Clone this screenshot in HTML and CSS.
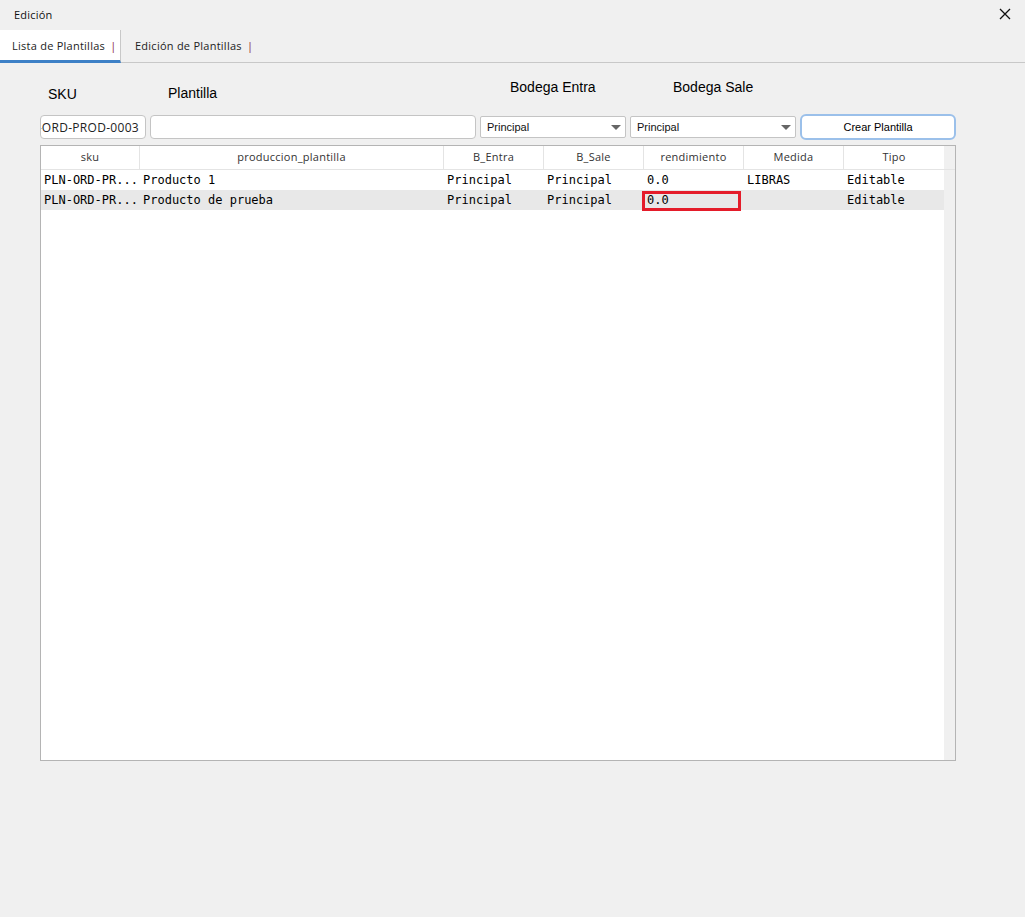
FILE: index.html
```html
<!DOCTYPE html>
<html lang="es">
<head>
    <meta charset="UTF-8">
    <title>Edición</title>
    <link rel="stylesheet" href="styles.css">
</head>
<body>
    <div class="titlebar">
        <span class="title">Edición</span>
        <svg class="close" width="12" height="12" viewBox="0 0 12 12">
            <path d="M1 1 L11 11 M11 1 L1 11" stroke="#111" stroke-width="1.3" fill="none"/>
        </svg>
    </div>

    <div class="tabs">
        <div class="tab active">Lista de Plantillas <span class="sep">|</span></div>
        <div class="tab">Edición de Plantillas <span class="sep">|</span></div>
        <div class="tab-rest"></div>
    </div>

    <div class="content">
        <div class="labels">
            <div class="label label-sku">SKU</div>
            <div class="label label-plantilla">Plantilla</div>
            <div class="label label-entra">Bodega Entra</div>
            <div class="label label-sale">Bodega Sale</div>
        </div>

        <div class="controls">
            <div class="field field-sku"><span>PLN-ORD-PROD-0003</span></div>
            <div class="field field-plantilla"></div>
            <div class="select select-entra">Principal <span class="arrow"></span></div>
            <div class="select select-sale">Principal <span class="arrow"></span></div>
            <button class="btn-crear">Crear Plantilla</button>
        </div>

        <div class="grid">
            <div class="row head">
                <div class="cell">sku</div>
                <div class="cell">produccion_plantilla</div>
                <div class="cell">B_Entra</div>
                <div class="cell">B_Sale</div>
                <div class="cell">rendimiento</div>
                <div class="cell">Medida</div>
                <div class="cell">Tipo</div>
            </div>
            <div class="body">
                <div class="rows">
                    <div class="row">
                        <div class="cell">PLN-ORD-PR...</div>
                        <div class="cell">Producto 1</div>
                        <div class="cell">Principal</div>
                        <div class="cell">Principal</div>
                        <div class="cell">0.0</div>
                        <div class="cell">LIBRAS</div>
                        <div class="cell">Editable</div>
                    </div>
                    <div class="row alt">
                        <div class="cell">PLN-ORD-PR...</div>
                        <div class="cell">Producto de prueba</div>
                        <div class="cell">Principal</div>
                        <div class="cell">Principal</div>
                        <div class="cell focused">0.0</div>
                        <div class="cell"></div>
                        <div class="cell">Editable</div>
                    </div>
                </div>
                <div class="scrollbar"></div>
            </div>
        </div>
    </div>
</body>
</html>
```

FILE: styles.css
```css
body {
    margin: 0;
    background-color: #f0f0f0;
    font-family: "Open Sans", "Liberation Sans", sans-serif;
    color: #111;
    width: 1025px;
    height: 917px;
    overflow: hidden;
}

.titlebar {
    height: 30px;
    display: flex;
    align-items: center;
    justify-content: space-between;
    padding: 0 14px 0 14px;
    box-sizing: border-box;
}

.title {
    font-size: 11px;
    letter-spacing: 0.2px;
    margin-top: -2px;
}

.close {
    margin-top: -2px;
}

.tabs {
    display: flex;
    height: 33px;
}

.tab {
    font-size: 11px;
    letter-spacing: 0.25px;
    padding: 0 0 0 14px;
    width: 121px;
    box-sizing: border-box;
    line-height: 31px;
    border-bottom: 1px solid #c8c8c8;
    color: #222;
}

.tab.active {
    background-color: #fff;
    padding-left: 12px;
    border-right: 1px solid #c8c8c8;
    border-bottom: 3px solid #3d80c6;
    line-height: 31px;
}

.tab:not(.active) {
    width: 140px;
}

.tab-rest {
    flex: 1;
    border-bottom: 1px solid #c8c8c8;
}

.sep {
    color: #8b1c3c;
    margin-left: 2px;
}

.content {
    padding: 0 0 0 40px;
}

.labels {
    display: flex;
    height: 51px;
    font-family: "Liberation Sans", Arial, sans-serif;
    font-size: 14px;
    color: #000;
}

.label {
    box-sizing: border-box;
}

.label-sku {
    width: 110px;
    padding: 23px 0 0 8px;
}

.label-plantilla {
    width: 330px;
    padding: 22px 0 0 18px;
}

.label-entra {
    width: 150px;
    padding: 16px 0 0 30px;
}

.label-sale {
    padding: 16px 0 0 43px;
}

.controls {
    display: flex;
    align-items: center;
    gap: 4px;
    height: 26px;
}

.field {
    height: 24px;
    background-color: #fff;
    border: 1px solid #c4c4c4;
    border-radius: 4px;
    box-sizing: border-box;
    font-size: 12px;
    letter-spacing: 0.3px;
    overflow: hidden;
    display: flex;
    align-items: center;
    justify-content: flex-end;
    padding: 0 6px;
    color: #222;
}

.field span {
    white-space: nowrap;
}

.field-sku {
    width: 106px;
}

.field-plantilla {
    width: 326px;
}

.select {
    height: 22px;
    background-color: #fff;
    border: 1px solid #c4c4c4;
    border-radius: 2px;
    box-sizing: border-box;
    font-family: "Liberation Sans", Arial, sans-serif;
    font-size: 11px;
    line-height: 20px;
    padding-left: 6px;
    position: relative;
}

.select-entra {
    width: 146px;
}

.select-sale {
    width: 166px;
}

.arrow {
    position: absolute;
    right: 4px;
    top: 8px;
    border-left: 5px solid transparent;
    border-right: 5px solid transparent;
    border-top: 5px solid #666;
}

.btn-crear {
    width: 156px;
    height: 26px;
    background-color: #fff;
    border: 2px solid #9bc0ea;
    border-radius: 6px;
    font-family: "Liberation Sans", Arial, sans-serif;
    font-size: 11px;
    color: #000;
    padding: 0;
}

.grid {
    margin-top: 5px;
    width: 916px;
    height: 616px;
    border: 1px solid #b4b4b4;
    box-sizing: border-box;
    background-color: #fff;
    display: flex;
    flex-direction: column;
}

.row {
    display: grid;
    grid-template-columns: 99px 304px 100px 100px 100px 100px 100px;
    height: 20px;
}

.row.head {
    height: 24px;
    grid-template-columns: 99px 304px 100px 100px 100px 100px 100px 11px;
    border-bottom: 1px solid #e4e4e4;
    box-sizing: border-box;
}

.row.head::after {
    content: "";
    background-color: #f0f0f0;
}

.head .cell {
    font-family: "Open Sans", sans-serif;
    font-size: 11px;
    letter-spacing: 0.25px;
    text-align: center;
    line-height: 22px;
    border-right: 1px solid #e4e4e4;
    color: #333;
}

.head .cell:last-child {
    border-right: none;
}

.body {
    flex: 1;
    display: flex;
}

.rows {
    width: 903px;
}

.scrollbar {
    width: 11px;
    background-color: #f0f0f0;
}

.rows .cell {
    font-family: "DejaVu Sans Mono", "Liberation Mono", monospace;
    font-size: 12px;
    line-height: 20px;
    padding-left: 3px;
    white-space: nowrap;
    overflow: hidden;
    color: #000;
}

.row.alt {
    background-color: #e8e8e8;
}

.cell.focused {
    position: relative;
    overflow: visible;
}

.cell.focused::after {
    content: "";
    position: absolute;
    left: -2px;
    top: 1px;
    width: 99px;
    height: 20px;
    border: 3px solid #e41c2a;
    box-sizing: border-box;
}
```
